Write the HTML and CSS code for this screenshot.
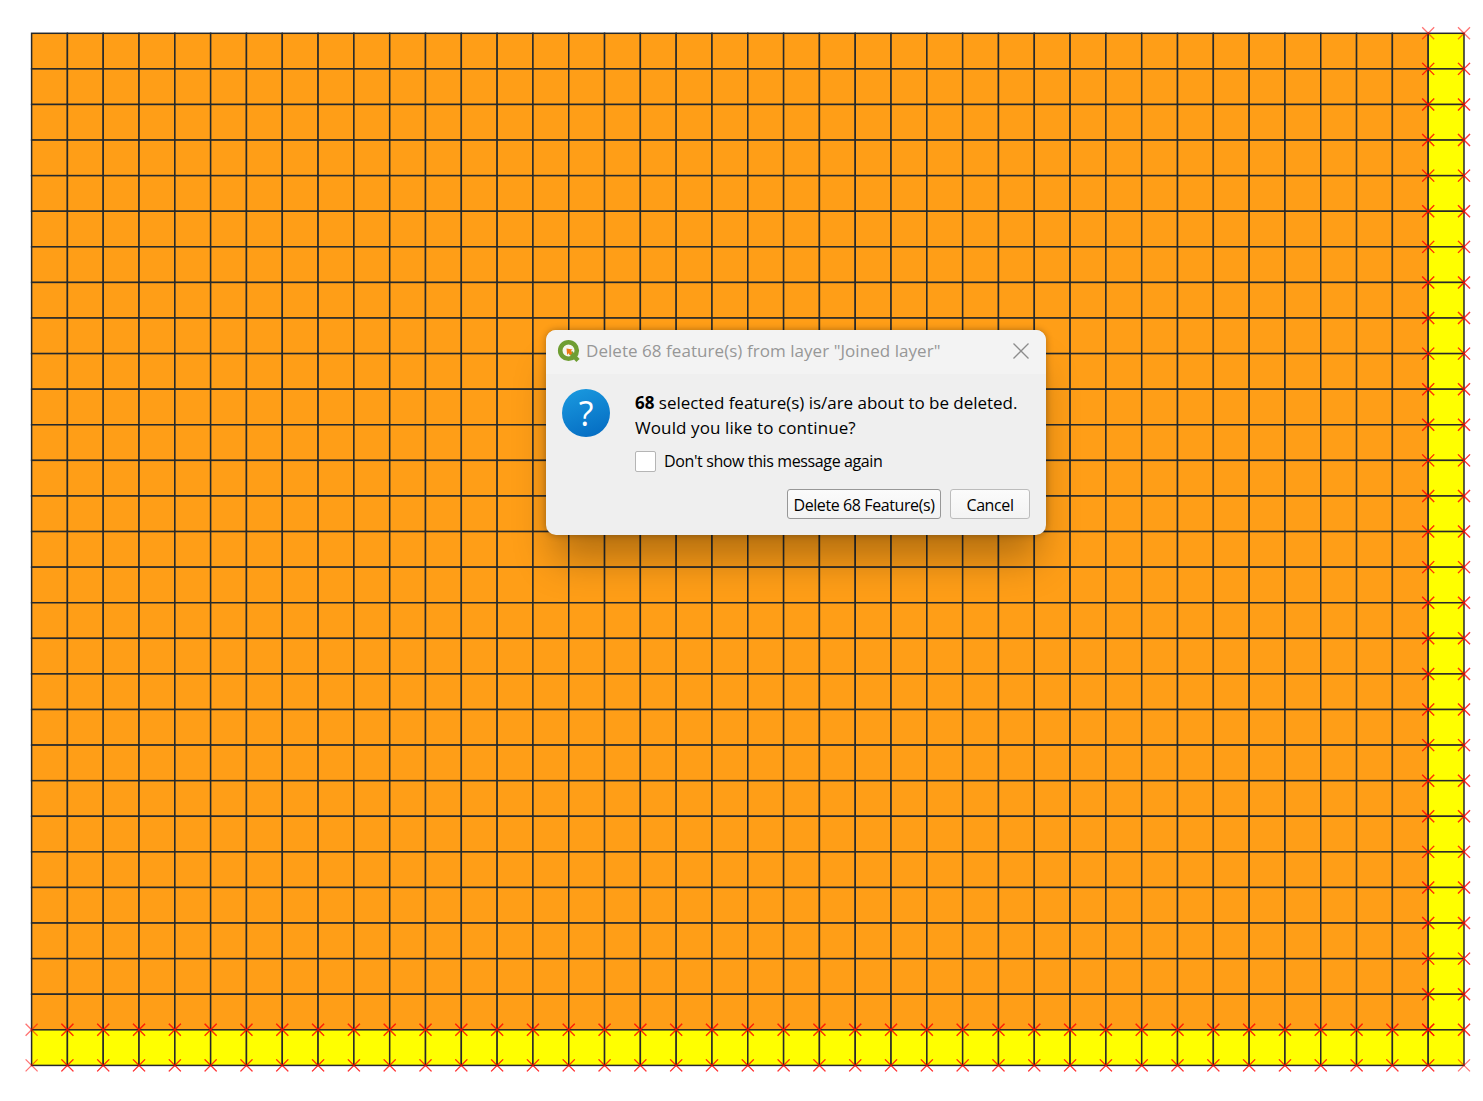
FILE: index.html
```html
<!DOCTYPE html>
<html lang="en">
<head>
    <meta charset="UTF-8">
    <title>Delete features</title>
    <link rel="stylesheet" href="styles.css">
    <script src="map.js" defer></script>
</head>
<body>
<svg id="map" class="map" width="1483" height="1101" viewBox="0 0 1483 1101"></svg>

<div class="dialog">
    <div class="title-bar">
        <svg class="qgis-logo" width="24" height="24" viewBox="0 0 24 24">
            <circle cx="11.5" cy="11.5" r="8.3" fill="#f6f6f0" stroke="#6f9e33" stroke-width="4.6"/>
            <path d="M13.5 13.5l7.5 8" stroke="#6f9e33" stroke-width="4.4" fill="none"/>
            <path d="M9.5 9.5l6 1-1.6 1.6 1.6 1.8-2 2-1.8-1.6-1.6 1.6z" fill="#ee7913"/>
        </svg>
        <span class="title-text">Delete 68 feature(s) from layer "Joined layer"</span>
        <svg class="close-icon" width="18" height="18" viewBox="0 0 18 18">
            <path d="M1.5 1.5l15 15M16.5 1.5l-15 15" stroke="#8c8c8c" stroke-width="1.3" fill="none"/>
        </svg>
    </div>
    <div class="dialog-body">
        <div class="message-row">
            <div class="question-icon">?</div>
            <div class="message">
                <p><b>68</b> selected feature(s) is/are about to be deleted.</p>
                <p class="message-ask">Would you like to continue?</p>
            </div>
        </div>
        <label class="check-row">
            <span class="check-box"></span>
            <span>Don't show this message again</span>
        </label>
        <div class="buttons">
            <div class="btn btn-delete">Delete 68 Feature(s)</div>
            <div class="btn btn-cancel">Cancel</div>
        </div>
    </div>
</div>
</body>
</html>
```

FILE: styles.css
```css
*{margin:0; padding:0; box-sizing:border-box;}
body{background:#fff; overflow:hidden; font-family:"Open Sans","Noto Sans",sans-serif; color:#000;}
.map{display:block;}

.dialog{position:absolute; left:546px; top:330px; width:500px; height:205px; border-radius:10px; overflow:hidden;
background:#efefef; box-shadow:0 32px 40px -8px rgba(0,0,0,.3), 0 0 7px rgba(0,0,0,.3);}
.title-bar{height:44px; background:#f3f3f3; display:flex; align-items:center; padding:0 16px 0 11px;}
.qgis-logo{flex:none; margin-right:5px; margin-top:-3px;}
.title-text{flex:1; font-size:17px; color:#979797; white-space:nowrap; margin-top:-4px; letter-spacing:.05px;}
.close-icon{flex:none; margin-top:-3px;}

.dialog-body{padding:15px 16px 0 16px; font-size:17px;}
.message-row{display:flex;}
.question-icon{flex:none; width:48px; height:48px; border-radius:50%; margin-right:25px;
background:linear-gradient(160deg,#1b9be0,#0369c0); color:#fff; font-size:34px; font-weight:500; line-height:49px; text-align:center;}
.message{line-height:25px; padding-top:1px; letter-spacing:-.02px;}
.message b{font-weight:700;}
.message-ask{letter-spacing:.1px;}

.check-row{display:flex; align-items:center; margin:10px 0 0 73px; font-size:16px; letter-spacing:-.38px;}
.check-box{width:21px; height:21px; background:#fff; border:1px solid #b5b5b5; border-radius:2px; margin-right:8px;}

.buttons{display:flex; justify-content:flex-end; gap:9px; margin-top:17px;}
.btn{height:30px; line-height:30px; text-align:center; font-size:16px; letter-spacing:-.4px;
background:linear-gradient(#fbfbfb,#f3f3f3); border:1px solid #a8a8a8; border-radius:3px;}
.btn-delete{width:154px; border-color:#979797;}
.btn-cancel{width:80px; border-color:#bcbcbc;}
```

FILE: map.js
```js
// grid of joined polygons, the 68 selected ones are the yellow cells
var NS='http://www.w3.org/2000/svg';
var oMap=document.getElementById('map');
var cols=40, rows=29;
var x0=31.6, y0=33.3, w=35.81, h=35.59;

function add(name,attrs){
    var o=document.createElementNS(NS,name);
    for(var k in attrs){
        o.setAttribute(k,attrs[k]);
    }
    oMap.appendChild(o);
    return o;
}

var selected=[];
for(var r=0;r<rows;r++){
    for(var c=0;c<cols;c++){
        var isSel=(c==cols-1 || r==rows-1);
        add('rect',{x:x0+c*w,y:y0+r*h,width:w,height:h,fill:isSel?'#ffff00':'#ff9e17',
            stroke:'#26292b','stroke-width':1.5});
        if(isSel){
            selected.push([c,r]);
        }
    }
}

// vertex markers, shared corners get drawn twice so they come out stronger
for(var i=0;i<selected.length;i++){
    var cell=selected[i];
    for(var a=0;a<2;a++){
        for(var b=0;b<2;b++){
            var px=x0+(cell[0]+a)*w, py=y0+(cell[1]+b)*h;
            add('path',{d:'M'+(px-6)+' '+(py-6)+'l12 12m0 -12l-12 12',stroke:'#ff0000','stroke-width':1.3,
                'stroke-opacity':0.55,fill:'none'});
        }
    }
}
```
